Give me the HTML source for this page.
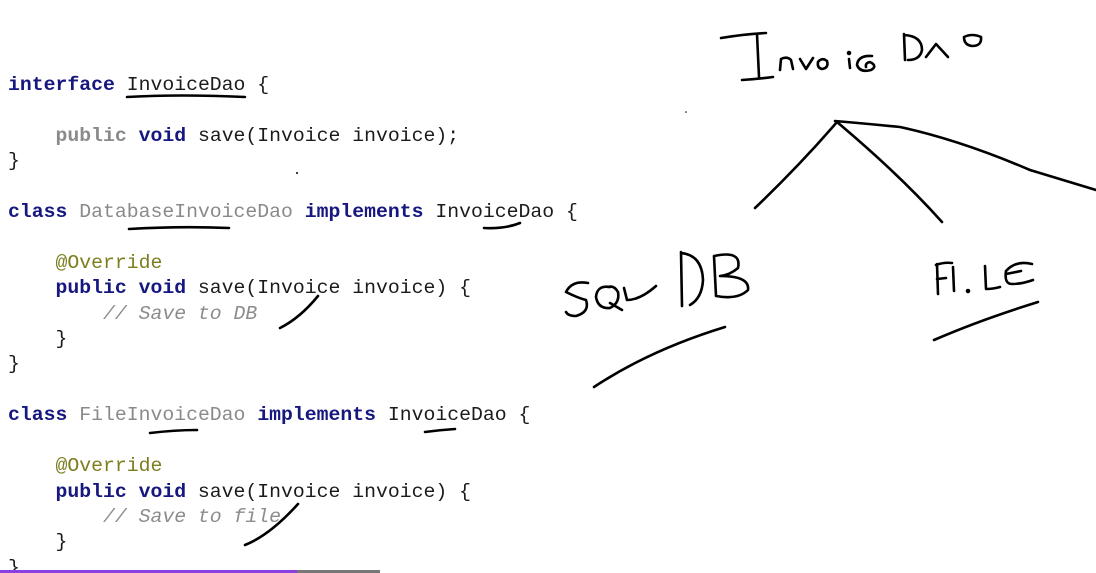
<!DOCTYPE html>
<html><head><meta charset="utf-8"><style>
html,body{margin:0;padding:0;background:#fff;width:1096px;height:573px;overflow:hidden;position:relative}
.code{position:absolute;left:8px;top:73px;font-family:"Liberation Mono",monospace;font-size:19.8px;line-height:25.4px;color:#1b1b1b;white-space:pre}
.k{color:#16177f;font-weight:bold}
.g{color:#8a8a8a}
.gk{color:#8a8a8a;font-weight:bold}
.a{color:#7d7d1e}
.c{color:#8c8c8c;font-style:italic}
svg{position:absolute;left:0;top:0}
.bar1{position:absolute;left:0;top:570px;width:297px;height:3px;background:#8a3fe0}
.bar2{position:absolute;left:297px;top:570px;width:83px;height:3px;background:#777}
</style></head><body>
<div class="code"><span class="k">interface</span> InvoiceDao {

    <span class="gk">public</span> <span class="k">void</span> save(Invoice invoice);
}

<span class="k">class</span> <span class="g">DatabaseInvoiceDao</span> <span class="k">implements</span> InvoiceDao {

    <span class="a">@Override</span>
    <span class="k">public void</span> save(Invoice invoice) {
        <span class="c">// Save to DB</span>
    }
}

<span class="k">class</span> <span class="g">FileInvoiceDao</span> <span class="k">implements</span> InvoiceDao {

    <span class="a">@Override</span>
    <span class="k">public void</span> save(Invoice invoice) {
        <span class="c">// Save to file</span>
    }
}</div>
<div class="bar1"></div><div class="bar2"></div>
<svg width="1096" height="573" viewBox="0 0 1096 573" fill="none" stroke="#000" stroke-width="2.6" stroke-linecap="round" stroke-linejoin="round">
<path d="M127 97 Q180 94 245 97"/>
<path d="M129 229 Q180 226 229 228"/>
<path d="M484 228 Q505 229 520 223"/>
<path d="M280 328 Q300 318 318 296"/>
<path d="M150 433 Q175 430 197 430"/>
<path d="M425 432 Q440 430 455 429"/>
<path d="M245 545 Q270 535 298 504"/>
<circle cx="297" cy="173" r="1" fill="#000" stroke="none"/>
<circle cx="686" cy="112" r="0.8" fill="#000" stroke="none"/>
<path d="M721 38 Q745 34 766 33"/>
<path d="M757 34 Q758 55 759 77"/>
<path d="M742 80 Q758 79 773 77"/>
<path d="M780 70 L781 59 Q787 56 791 60 L793 69"/>
<path d="M800 59 L806 69 L813 58"/>
<path d="M818 62 Q822 57 827 61 Q829 68 822 69 Q817 68 818 62"/>
<path d="M849 59 L850 68"/><circle cx="849" cy="53" r="1" fill="#000"/>
<path d="M872 56 Q858 55 857 65 Q860 73 871 70 Q878 66 870 62 Q865 63 866 67"/>
<path d="M904 34 L905 60 M904 35 Q922 36 922 50 Q920 60 908 60"/>
<path d="M926 57 L936 44 L948 57"/>
<path d="M964 37 Q972 33 981 37 Q982 46 972 46 Q964 45 964 37"/>
<path d="M837 122 Q800 165 755 208"/>
<path d="M837 122 Q900 175 942 222"/>
<path d="M835 121 Q870 124 900 127 Q960 140 1030 170 Q1070 182 1096 190"/>
<path d="M588 283 Q572 280 566 292 Q578 298 586 300 Q590 312 576 316 Q568 316 566 312"/>
<path d="M610 287 Q597 285 596 297 Q598 309 610 308 Q620 303 618 292 Q614 285 608 287 M610 303 L622 310"/>
<path d="M624 288 L627 300 Q640 300 656 286"/>
<path d="M681 252 L682 306 M681 253 Q702 255 703 280 Q702 298 690 305"/>
<path d="M714 256 L716 296 M714 256 Q742 250 738 268 Q730 275 720 276 Q750 276 748 290 Q738 300 716 296"/>
<path d="M594 387 Q650 350 725 327"/>
<path d="M937 264 L938 294 M936 265 Q944 262 952 263 M937 279 L946 278"/>
<path d="M953 267 L954 291"/><circle cx="968" cy="291" r="1" fill="#000"/>
<path d="M985 266 L986 289 Q993 289 1000 287"/>
<path d="M1032 264 Q1016 260 1006 271 Q1004 284 1012 284 Q1022 284 1033 280 M1006 274 L1021 271"/>
<path d="M934 340 Q980 320 1038 302"/>
</svg>
</body></html>
